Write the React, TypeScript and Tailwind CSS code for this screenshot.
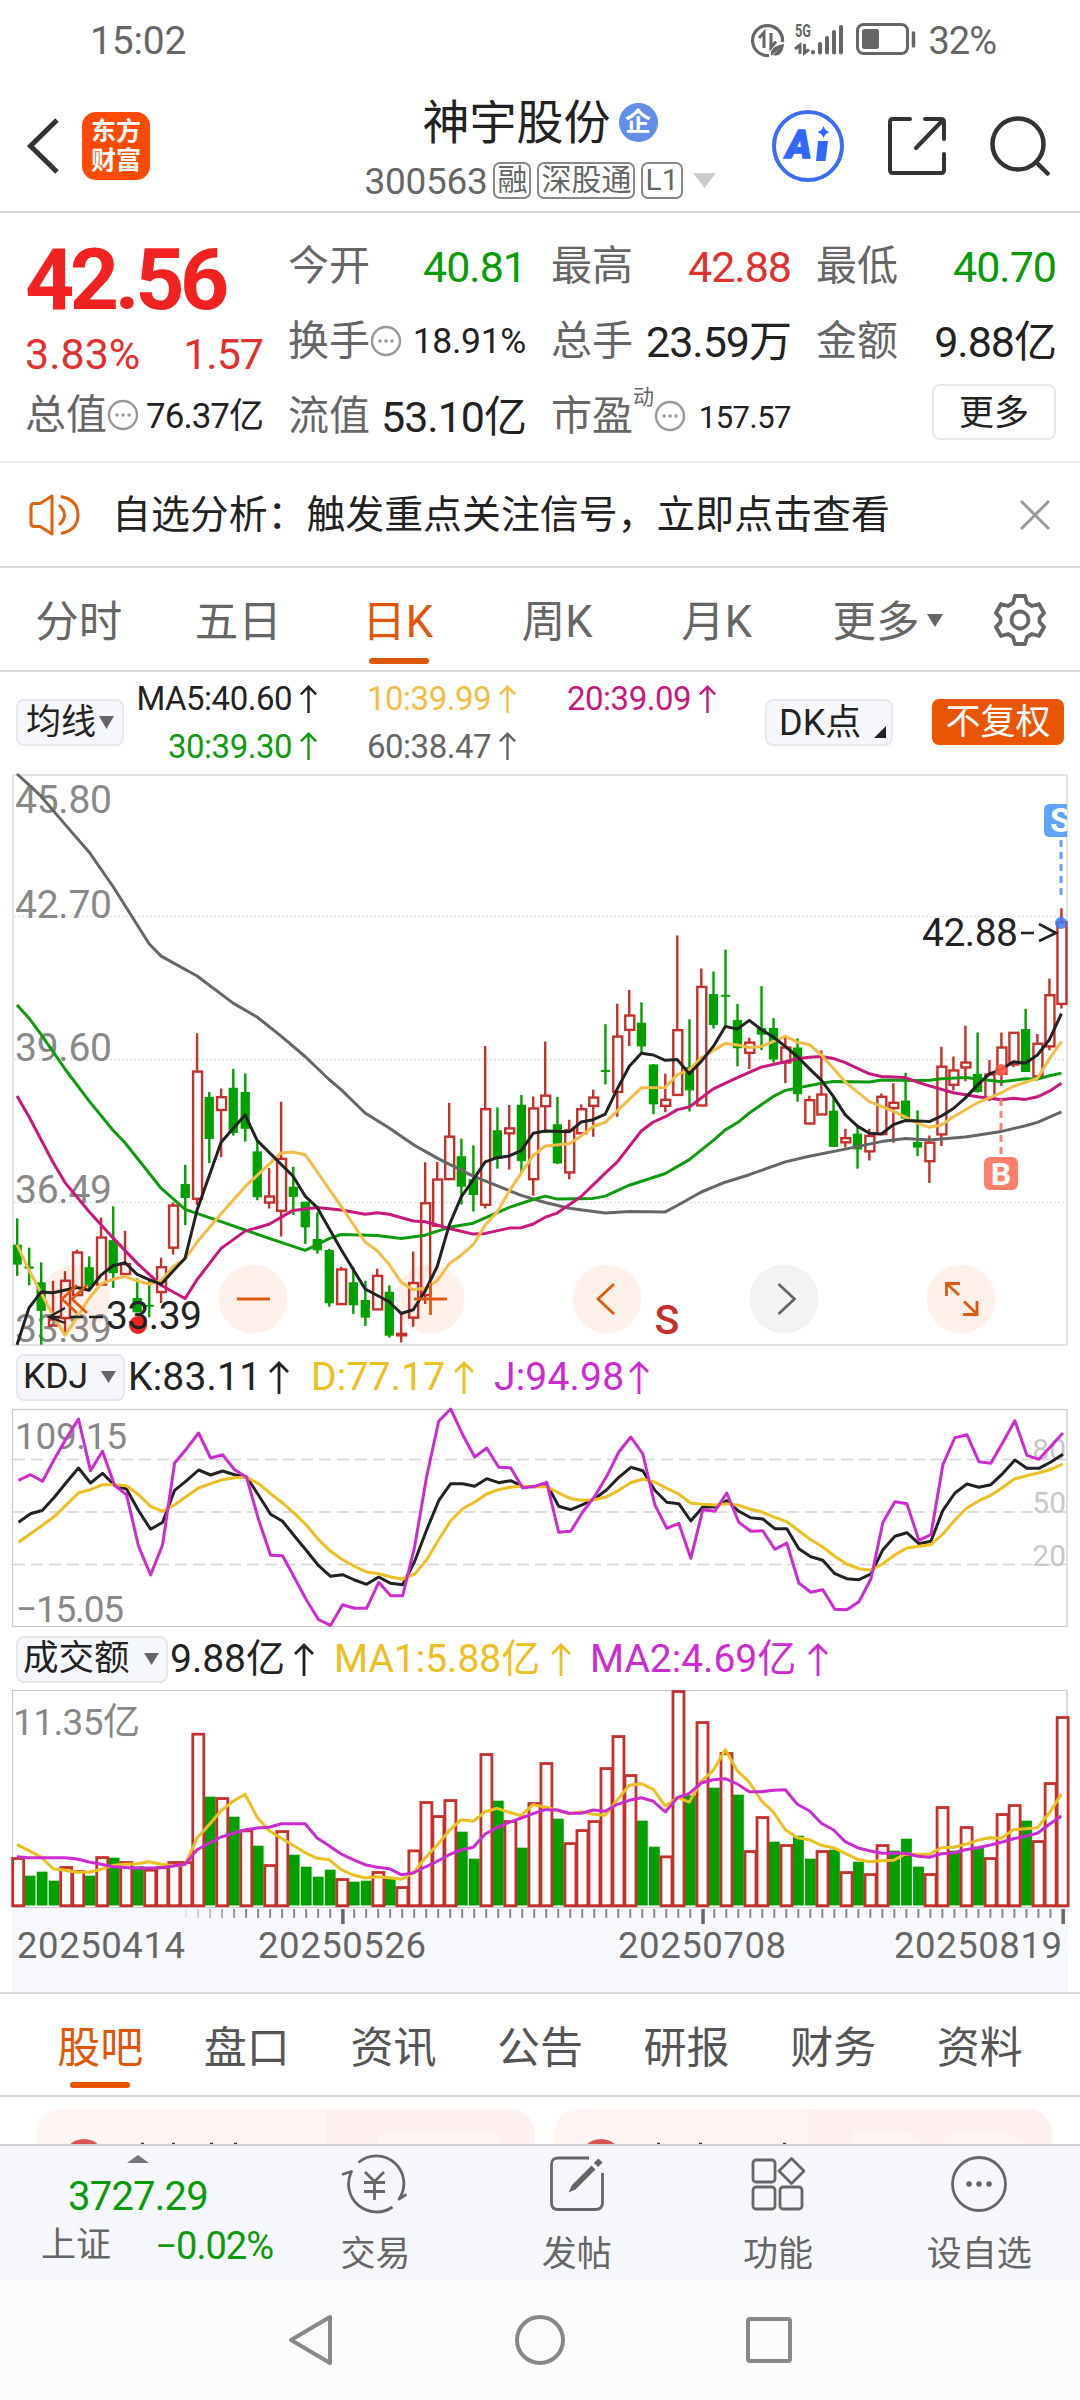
import type { ReactNode } from "react";
import clsx from "clsx";

type Candle = [color: "r" | "g", high: number, top: number, bottom: number, low: number];
type Series = [index: number, value: number][];

// candles, one per trading day, in chart units from the top edge
const CANDLES: Candle[] = [
  ["g", 1192, 1262, 1315, 1345], ["g", 1270, 1320, 1326, 1370], ["g", 1309, 1362, 1438, 1528], ["r", 1358, 1461, 1477, 1477],
  ["r", 1333, 1358, 1457, 1494], ["r", 1275, 1283, 1396, 1396], ["g", 1293, 1322, 1370, 1380], ["r", 1190, 1243, 1368, 1368],
  ["g", 1160, 1250, 1338, 1377], ["r", 1225, 1314, 1340, 1340], ["g", 1352, 1404, 1442, 1442], ["g", 1355, 1422, 1427, 1455],
  ["r", 1297, 1322, 1388, 1417], ["r", 1150, 1158, 1270, 1288], ["g", 1050, 1101, 1138, 1210], ["r", 700, 802, 1140, 1157],
  ["g", 856, 869, 981, 1045], ["r", 847, 870, 904, 1030], ["g", 795, 845, 965, 972], ["g", 807, 856, 954, 988],
  ["g", 985, 1014, 1136, 1144], ["r", 1058, 1134, 1150, 1166], ["r", 882, 1034, 1172, 1240], ["g", 1055, 1108, 1135, 1183],
  ["g", 1148, 1148, 1216, 1260], ["g", 1176, 1247, 1277, 1286], ["g", 1273, 1276, 1418, 1427], ["r", 1321, 1328, 1420, 1420],
  ["g", 1322, 1362, 1423, 1446], ["g", 1358, 1409, 1456, 1478], ["r", 1326, 1345, 1434, 1434], ["g", 1370, 1387, 1504, 1509],
  ["r", 1445, 1499, 1503, 1522], ["r", 1280, 1364, 1456, 1480], ["r", 1043, 1152, 1396, 1420], ["r", 1042, 1089, 1212, 1212],
  ["r", 885, 975, 1088, 1088], ["g", 980, 1027, 1108, 1155], ["g", 998, 1088, 1130, 1174], ["r", 734, 902, 1156, 1166],
  ["g", 897, 958, 1034, 1060], ["r", 891, 953, 966, 1062], ["g", 864, 890, 1040, 1070], ["r", 868, 900, 1088, 1132],
  ["r", 722, 866, 894, 965], ["g", 869, 942, 1046, 1048], ["r", 930, 958, 1070, 1088], ["r", 889, 902, 966, 966],
  ["r", 850, 871, 893, 975], ["g", 676, 798, 803, 836], ["r", 622, 709, 856, 922], ["r", 585, 653, 691, 734],
  ["g", 618, 672, 735, 755], ["g", 782, 783, 889, 915], ["r", 808, 877, 893, 910], ["r", 440, 692, 864, 864],
  ["g", 663, 790, 852, 908], ["r", 528, 577, 892, 892], ["g", 536, 596, 678, 688], ["g", 478, 598, 603, 683],
  ["g", 622, 665, 740, 788], ["r", 712, 725, 752, 795], ["g", 575, 686, 704, 745], ["g", 660, 686, 770, 778],
  ["r", 710, 738, 778, 832], ["g", 714, 738, 862, 882], ["r", 866, 878, 940, 940], ["r", 746, 863, 916, 916],
  ["g", 870, 906, 1002, 1002], ["r", 954, 979, 990, 1004], ["g", 948, 967, 1009, 1060], ["r", 954, 973, 1014, 1038],
  ["r", 860, 869, 968, 968], ["r", 833, 885, 899, 991], ["g", 805, 879, 927, 930], ["g", 905, 989, 1004, 1027],
  ["r", 972, 991, 1040, 1098], ["r", 736, 789, 969, 1000], ["r", 762, 799, 837, 852], ["r", 680, 778, 791, 828],
  ["g", 698, 808, 856, 858], ["r", 771, 810, 874, 880], ["r", 698, 738, 808, 840], ["r", 698, 699, 783, 790],
  ["g", 635, 689, 803, 803], ["r", 702, 728, 815, 820], ["r", 555, 599, 735, 745], ["r", 368, 405, 622, 634],
];

const MA60: Series = [[0, 11], [1, 40], [2, 70], [4, 145], [6, 218], [8, 310], [11, 462], [12, 495], [15, 548], [18, 620], [20, 657], [22, 708], [24, 762], [26, 823], [27, 850], [29, 912], [31, 952], [33, 996], [35, 1032], [38, 1080], [42, 1131], [44, 1150], [46, 1165], [49, 1178], [51, 1174], [54, 1175], [55, 1158], [57, 1122], [59, 1096], [61, 1076], [64, 1042], [66, 1027], [69, 1008], [72, 988], [74, 980], [76, 984], [79, 976], [82, 961], [84, 946], [85, 937], [87, 909]];
const MA30: Series = [[0, 625], [1, 660], [2, 703], [4, 795], [6, 880], [8, 958], [9, 991], [12, 1112], [14, 1168], [17, 1201], [19, 1223], [21, 1245], [24, 1277], [25, 1262], [26, 1246], [27, 1235], [30, 1238], [32, 1246], [34, 1237], [36, 1216], [38, 1205], [41, 1163], [43, 1142], [44, 1133], [45, 1141], [48, 1139], [49, 1133], [51, 1104], [54, 1073], [56, 1036], [58, 985], [59, 957], [60, 938], [61, 912], [63, 868], [64, 852], [67, 833], [68, 828], [71, 830], [72, 824], [75, 826], [76, 825], [77, 821], [79, 818], [82, 829], [84, 821], [85, 822], [86, 813], [87, 806]];
const MA20: Series = [[0, 867], [1, 922], [3, 1043], [4, 1097], [6, 1174], [8, 1244], [10, 1311], [12, 1370], [14, 1405], [15, 1355], [17, 1272], [19, 1226], [21, 1208], [23, 1171], [25, 1163], [27, 1170], [29, 1181], [30, 1177], [31, 1181], [33, 1199], [34, 1201], [36, 1219], [38, 1234], [39, 1232], [41, 1218], [42, 1217], [43, 1207], [44, 1189], [45, 1178], [47, 1134], [49, 1072], [50, 1042], [52, 960], [53, 936], [54, 922], [55, 903], [56, 896], [58, 848], [60, 818], [62, 790], [64, 776], [65, 768], [66, 764], [67, 762], [68, 767], [69, 778], [71, 808], [72, 815], [74, 818], [75, 830], [76, 840], [78, 858], [80, 869], [82, 877], [83, 873], [84, 876], [85, 869], [86, 854], [87, 833]];
const MA10: Series = [[0, 1262], [1, 1330], [2, 1390], [3, 1450], [4, 1503], [5, 1455], [6, 1405], [7, 1366], [8, 1354], [9, 1346], [10, 1358], [11, 1367], [12, 1358], [13, 1320], [14, 1300], [15, 1255], [17, 1180], [19, 1108], [21, 1048], [22, 1018], [23, 1016], [24, 1023], [25, 1068], [27, 1160], [29, 1255], [30, 1278], [31, 1315], [32, 1362], [33, 1382], [34, 1378], [35, 1358], [36, 1313], [37, 1290], [38, 1262], [39, 1210], [40, 1175], [41, 1120], [42, 1072], [43, 1025], [44, 1000], [46, 994], [47, 973], [48, 948], [49, 937], [52, 845], [54, 844], [55, 810], [56, 797], [57, 765], [59, 727], [60, 731], [61, 738], [62, 735], [63, 722], [64, 708], [65, 724], [66, 730], [67, 758], [68, 793], [69, 830], [71, 882], [73, 907], [75, 939], [76, 950], [77, 944], [78, 922], [80, 885], [81, 872], [82, 858], [83, 841], [85, 820], [86, 768], [87, 722]];
const MA5: Series = [[0, 1528], [1, 1430], [2, 1388], [3, 1390], [5, 1376], [6, 1383], [7, 1343], [8, 1318], [9, 1310], [10, 1341], [11, 1355], [12, 1367], [13, 1332], [14, 1298], [15, 1170], [17, 990], [19, 917], [20, 985], [23, 1080], [24, 1133], [25, 1163], [27, 1275], [29, 1380], [31, 1414], [32, 1445], [33, 1435], [34, 1385], [35, 1320], [36, 1210], [37, 1135], [38, 1090], [39, 1042], [40, 1031], [41, 1026], [42, 1012], [43, 966], [44, 960], [46, 962], [47, 936], [48, 930], [49, 915], [50, 848], [51, 788], [52, 753], [53, 758], [54, 772], [55, 770], [56, 808], [57, 775], [58, 735], [59, 682], [60, 689], [61, 666], [62, 690], [63, 710], [64, 735], [65, 762], [66, 794], [67, 825], [68, 868], [69, 917], [70, 947], [71, 966], [72, 968], [73, 943], [74, 932], [76, 935], [77, 920], [78, 900], [79, 872], [80, 838], [81, 808], [82, 796], [83, 776], [84, 780], [85, 758], [86, 717], [87, 648]];

const KDJ_J = [422, 405, 425, 358, 295, 238, 393, 335, 437, 465, 620, 706, 615, 370, 327, 280, 355, 345, 390, 413, 540, 647, 648, 715, 782, 840, 857, 795, 806, 806, 728, 768, 768, 620, 410, 245, 208, 285, 352, 325, 383, 384, 445, 440, 428, 578, 575, 517, 470, 410, 337, 292, 343, 495, 566, 551, 656, 510, 515, 460, 548, 575, 573, 629, 610, 730, 758, 750, 809, 810, 786, 718, 548, 486, 492, 602, 585, 375, 294, 285, 366, 371, 308, 243, 347, 359, 320, 280];
const KDJ_K = [548, 522, 512, 472, 428, 385, 430, 401, 437, 448, 513, 569, 548, 452, 423, 391, 406, 394, 405, 412, 467, 524, 545, 590, 633, 678, 710, 705, 721, 734, 712, 731, 735, 665, 570, 483, 432, 432, 440, 417, 429, 423, 440, 441, 433, 500, 510, 495, 477, 450, 413, 383, 393, 452, 488, 492, 544, 502, 502, 483, 515, 534, 538, 567, 567, 627, 651, 662, 702, 717, 720, 703, 630, 590, 579, 612, 605, 512, 460, 433, 443, 435, 401, 361, 386, 386, 367, 344];
const KDJ_D = [608, 582, 557, 530, 495, 459, 450, 435, 435, 438, 465, 500, 515, 495, 470, 445, 432, 420, 414, 413, 432, 462, 490, 522, 557, 600, 635, 660, 680, 697, 702, 712, 718, 703, 660, 600, 543, 507, 487, 463, 450, 442, 440, 441, 441, 460, 477, 482, 480, 471, 452, 429, 418, 427, 446, 463, 491, 494, 496, 492, 497, 509, 518, 533, 546, 573, 600, 622, 650, 673, 687, 692, 672, 645, 625, 620, 615, 583, 541, 505, 483, 467, 443, 417, 408, 399, 389, 373];

const VOLUMES = [563, 618, 606, 633, 590, 602, 618, 560, 564, 575, 590, 598, 590, 575, 575, 190, 381, 383, 441, 480, 528, 584, 482, 555, 591, 621, 600, 626, 636, 633, 605, 624, 650, 540, 395, 437, 389, 486, 567, 251, 393, 452, 534, 398, 278, 447, 518, 479, 452, 293, 197, 314, 453, 531, 558, 62, 377, 155, 354, 248, 375, 542, 440, 516, 524, 498, 567, 542, 540, 605, 576, 611, 524, 543, 507, 591, 611, 410, 543, 470, 531, 563, 431, 404, 453, 512, 338, 140];
// days whose turnover bar is drawn as a solid green (falling) bar
const GREEN_VOLUMES = new Set([1, 2, 3, 6, 8, 10, 16, 18, 20, 23, 24, 25, 26, 28, 29, 31, 37, 38, 40, 42, 45, 52, 53, 56, 58, 60, 63, 65, 66, 68, 70, 73, 74, 75, 78, 80, 84]);
const VOL_MA1: Series = [[0, 525], [1, 543], [2, 562], [3, 597], [4, 602], [5, 608], [6, 608], [7, 599], [8, 587], [9, 584], [10, 582], [11, 576], [12, 584], [13, 588], [14, 585], [15, 505], [16, 465], [17, 423], [18, 395], [19, 374], [20, 443], [21, 483], [22, 505], [23, 527], [24, 549], [25, 566], [26, 570], [27, 600], [28, 616], [29, 625], [30, 621], [31, 624], [32, 629], [33, 610], [34, 565], [35, 526], [36, 483], [37, 450], [38, 455], [39, 426], [40, 416], [41, 428], [42, 438], [43, 405], [44, 412], [45, 422], [46, 432], [47, 426], [48, 434], [49, 437], [50, 390], [51, 347], [52, 342], [53, 359], [54, 409], [55, 384], [56, 397], [57, 335], [58, 302], [59, 240], [60, 303], [61, 338], [62, 393], [63, 427], [64, 480], [65, 504], [66, 510], [67, 527], [68, 534], [69, 551], [70, 569], [71, 576], [72, 573], [73, 572], [74, 553], [75, 554], [76, 554], [77, 534], [78, 533], [79, 524], [80, 512], [81, 504], [82, 506], [83, 480], [84, 477], [85, 474], [86, 430], [87, 373]];
const VOL_MA2: Series = [[0, 561], [1, 564], [4, 564], [5, 568], [6, 577], [7, 584], [8, 591], [10, 596], [12, 594], [14, 584], [15, 540], [16, 521], [17, 502], [19, 480], [20, 475], [21, 473], [22, 462], [24, 462], [25, 505], [26, 528], [27, 553], [28, 570], [29, 585], [30, 593], [31, 597], [32, 615], [33, 610], [34, 592], [35, 575], [36, 555], [37, 541], [38, 533], [39, 493], [40, 474], [41, 458], [42, 445], [43, 432], [44, 420], [45, 421], [46, 431], [47, 431], [48, 421], [49, 425], [50, 404], [51, 392], [52, 384], [53, 395], [54, 427], [55, 384], [56, 371], [57, 340], [58, 330], [59, 327], [60, 343], [61, 366], [62, 366], [63, 362], [64, 360], [65, 404], [66, 423], [67, 461], [68, 480], [69, 516], [70, 534], [71, 543], [72, 551], [74, 551], [75, 560], [76, 563], [77, 552], [78, 550], [79, 540], [80, 534], [81, 527], [82, 518], [83, 507], [84, 500], [85, 491], [86, 464], [87, 439]];

const STEP = 12.005;
const RED = "#c5302d";
const GREEN = "#00a000";

const kx = (i: number) => 17 + i * STEP;
const ky = (v: number) => (v - 11) / 2.658;
const jx = (i: number) => 18.5 + i * STEP;
const jy = (v: number) => (v - 208) / 3;
const vy = (v: number) => (v - 61) / 3;

const toPoints = (s: Series, x: (i: number) => number, y: (v: number) => number) =>
  s.map(([i, v]) => `${x(i).toFixed(1)},${y(v).toFixed(1)}`).join(" ");

const indexed = (values: number[]): Series => values.map((v, i) => [i, v]);

function Line({ points, color, width = 3 }: { points: string; color: string; width?: number }) {
  return <polyline points={points} fill="none" stroke={color} strokeWidth={width} strokeLinejoin="round" />;
}

function Up({ className = "h-[33px] w-[20px]" }: { className?: string }) {
  return (
    <svg viewBox="0 0 20 33" className={className} fill="none" stroke="currentColor" strokeWidth="2.800">
      <path d="M10 33V1.500M1 11L10 2L19 11" />
    </svg>
  );
}

function Caret({ className }: { className?: string }) {
  return (
    <svg viewBox="0 0 14 12" preserveAspectRatio="none" className={className} fill="currentColor">
      <path d="M0 0h14L7 12z" />
    </svg>
  );
}

function StatusBar() {
  return (
    <div className="flex h-[80px] items-center pl-[90px] pr-[84px] text-[#666]">
      <span className="pt-[2px] text-[39px] tracking-[-0.200px]">15:02</span>
      <svg viewBox="0 0 168 36" className="ml-auto mr-[10px] h-[36px] w-[168px]">
        <g fill="none" stroke="#666" strokeWidth="3.200">
          <path d="M19 33.500A15 15 0 1 1 32.500 20" />
          <path d="M9 16l5-5.500V26M21 11v14.500l5-6" strokeWidth="3" />
        </g>
        <path d="M21 34c-1-7 3-10 13-12-1 9-5 13-11 11l7-7z" fill="#666" />
        <text x="45" y="14.500" fontSize="18" fontWeight="700" fill="#666" textLength="16" lengthAdjust="spacingAndGlyphs">5G</text>
        <path d="M45 27l5-4V32M54.500 22v9l4.500-3.500" fill="none" stroke="#666" strokeWidth="3" />
        <g stroke="#666" strokeWidth="4" strokeLinecap="round">
          <path d="M63 30v.5M70 22v8.500M77 16v14.500M84 10v20.500M91 5v25.500" />
        </g>
        <rect x="107.500" y="2.500" width="50" height="29" rx="6" fill="none" stroke="#666" strokeWidth="3" />
        <rect x="112" y="7" width="17" height="20" rx="2.500" fill="#666" />
        <path d="M163.500 11v13" stroke="#666" strokeWidth="3.500" strokeLinecap="round" />
      </svg>
      <span className="pt-[2px] text-[38px] tracking-[-1px]">32%</span>
    </div>
  );
}

function Tag({ children }: { children: ReactNode }) {
  return (
    <span className="flex h-[37px] items-center justify-center rounded-[7px] border-2 border-[#888] px-[2px] text-[30px] leading-none">
      {children}
    </span>
  );
}

function Header() {
  return (
    <header className="grid h-[133px] grid-cols-[1fr_auto_1fr] border-b-2 border-[#d8d8d8]">
      <div className="flex items-center gap-[22px] pl-[26px]">
        <svg viewBox="0 0 34 58" className="h-[58px] w-[34px]" fill="none" stroke="#333" strokeWidth="5">
          <path d="M31 3L4.500 29L31 55" />
        </svg>
        <div className="flex h-[68px] w-[68px] flex-col items-center justify-center rounded-[14px] bg-[#ff4a05] text-[25px] font-bold leading-[29px] text-white">
          <span>东方</span>
          <span>财富</span>
        </div>
      </div>
      <div className="flex flex-col items-center pt-[15px]">
        <div className="flex h-[54px] items-center gap-[8px]">
          <h1 className="text-[47px] leading-none text-[#222]">神宇股份</h1>
          <span className="flex h-[39px] w-[39px] items-center justify-center rounded-full bg-[#628eea] text-[26px] font-bold leading-none text-white">
            企
          </span>
        </div>
        <div className="mt-[12px] flex h-[38px] items-center gap-[6px] text-[#666]">
          <span className="pt-[2px] text-[37px] leading-none tracking-[-0.300px]">300563</span>
          <Tag>融</Tag>
          <Tag>深股通</Tag>
          <Tag>L1</Tag>
          <Caret className="ml-[4px] h-[15px] w-[23px] text-[#ccc]" />
        </div>
      </div>
      <div className="flex items-center justify-end gap-[44px] pr-[30px]">
        <svg viewBox="0 0 72 72" className="h-[72px] w-[72px]">
          <circle cx="36" cy="36" r="34" fill="none" stroke="#3d6cf0" strokeWidth="4" />
          <text x="14" y="48" fontSize="39" fontWeight="900" fill="#3366ff" fontStyle="italic" stroke="#3366ff" strokeWidth="1.500">A</text>
          <path d="M46 31h10l-2.500 20h-9.500z" fill="#3366ff" />
          <path d="M51.500 16q1.500 5 6 6q-4.500 1.500-6 6q-1.500-4.500-6-6q4.500-1 6-6z" fill="#3366ff" />
        </svg>
        <svg viewBox="0 0 58 58" className="h-[58px] w-[58px]" fill="none" stroke="#333" strokeWidth="4" strokeLinecap="round" strokeLinejoin="round">
          <path d="M22 2H5q-3 0-3 3v48q0 3 3 3h48q3 0 3-3V37" />
          <path d="M37 2h16q3 0 3 3v17M55 3L28 31" />
        </svg>
        <svg viewBox="0 0 60 60" className="h-[60px] w-[60px]" fill="none" stroke="#333" strokeWidth="4.500" strokeLinecap="round">
          <circle cx="28" cy="28" r="25.500" />
          <path d="M46 46L57.500 57.500" />
        </svg>
      </div>
    </header>
  );
}

function Dots() {
  return (
    <svg viewBox="0 0 32 32" className="h-[32px] w-[32px] text-[#999]">
      <circle cx="16" cy="16" r="14" fill="none" stroke="currentColor" strokeWidth="2.400" />
      <path d="M10 16h.1M16 16h.1M22 16h.1" stroke="currentColor" strokeWidth="3.500" strokeLinecap="round" />
    </svg>
  );
}

function Stat({ label, value, dots, sup, color = "text-[#222]", size = "text-[43px] tracking-[-1px]" }: {
  label: string;
  value: string;
  dots?: boolean;
  sup?: string;
  color?: string;
  size?: string;
}) {
  return (
    <div className="flex h-[56px] items-center whitespace-nowrap leading-none">
      <span className="text-[41px] text-[#666]">{label}</span>
      {sup && <span className="mb-[38px] text-[21px] text-[#666]">{sup}</span>}
      {dots && <Dots />}
      <span className={clsx("-mr-[2px] ml-auto pt-[2px]", size, color)}>{value}</span>
    </div>
  );
}

function Quote() {
  return (
    <section className="grid h-[250px] grid-cols-[236px_236px_238px_238px] gap-x-[27px] border-b-2 border-[#eee] pl-[25px]">
      <div className="flex flex-col pt-[25px]">
        <div className="h-[83px] text-[86px] font-bold leading-[83px] tracking-[-4.500px] text-[#f22222]">42.56</div>
        <div className="mt-[3px] flex h-[60px] items-center justify-between text-[43px] text-[#e03030]">
          <span>3.83%</span>
          <span className="-mr-[2px] tracking-[-1px]">1.57</span>
        </div>
        <div className="mt-[3px]">
          <Stat label="总值" value="76.37亿" dots size="text-[35px] tracking-[-1px]" />
        </div>
      </div>
      <div className="flex flex-col gap-[19px] pt-[25px]">
        <Stat label="今开" value="40.81" color="text-[#0a9a0a]" />
        <Stat label="换手" value="18.91%" dots size="text-[35.500px] tracking-[-0.300px]" />
        <Stat label="流值" value="53.10亿" />
      </div>
      <div className="flex flex-col gap-[19px] pt-[25px]">
        <Stat label="最高" value="42.88" color="text-[#e03030]" />
        <Stat label="总手" value="23.59万" />
        <Stat label="市盈" value="157.57" sup="动" dots size="text-[31px] tracking-[-0.500px]" />
      </div>
      <div className="flex flex-col gap-[19px] pt-[25px]">
        <Stat label="最低" value="40.70" color="text-[#0a9a0a]" />
        <Stat label="金额" value="9.88亿" />
        <button className="-mr-[2px] -mt-[4px] ml-auto flex h-[56px] w-[124px] items-center justify-center rounded-[8px] border-2 border-[#e6e6e6] pt-[2px] text-[35px] leading-none text-[#222]">
          更多
        </button>
      </div>
    </section>
  );
}

function Notice() {
  return (
    <div className="flex h-[105px] items-center border-b-2 border-[#d8d8d8] pl-[28px] pr-[30px]">
      <svg viewBox="0 0 54 44" className="h-[44px] w-[54px]" fill="none" stroke="#e0600f" strokeWidth="3" strokeLinejoin="round">
        <path d="M24 3L12 10.500H6Q3 10.500 3 14V30Q3 33.500 6 33.500H12L24 41z" />
        <path d="M31 12Q42 22 31 32M33 3.500Q50 7 50 22T33 40.500" />
      </svg>
      <p className="ml-[30px] whitespace-nowrap pt-[1px] text-[38.900px] text-[#222]">自选分析：触发重点关注信号，立即点击查看</p>
      <svg viewBox="0 0 30 30" className="ml-auto h-[30px] w-[30px]" stroke="#999" strokeWidth="3">
        <path d="M1 1L29 29M29 1L1 29" />
      </svg>
    </div>
  );
}

const PERIODS = ["分时", "五日", "日K", "周K", "月K"];

function PeriodTabs() {
  return (
    <nav className="flex h-[104px] border-b-2 border-[#d8d8d8] pr-[34px] text-[43.500px] leading-none text-[#666]">
      {PERIODS.map((p) => (
        <div key={p} className={clsx("flex w-[159.500px] flex-col items-center pt-[33px]", p === "日K" && "text-[#e0560a]")}>
          <span className="-ml-[2px]">{p}</span>
          {p === "日K" && <i className="mt-[13px] h-[6px] w-[60px] rounded-full bg-[#e0560a]" />}
        </div>
      ))}
      <div className="flex items-start gap-[7px] pl-[35px] pt-[33px]">
        <span>更多</span>
        <Caret className="mt-[13px] h-[13px] w-[16px]" />
      </div>
      <svg viewBox="0 0 52 52" className="ml-auto mt-[26px] h-[52px] w-[52px]" fill="none" stroke="#666" strokeWidth="3.800" strokeLinejoin="round">
        <path d="M21 2H31L33 9L38 12L45 10L50 19L45.500 24V28L50 33L45 42L38 40L33 43L31 50H21L19 43L14 40L7 42L2 33L6.500 28V24L2 19L7 10L14 12L19 9Z" />
        <circle cx="26" cy="26" r="8.500" />
      </svg>
    </nav>
  );
}

function MaItem({ children, className }: { children: ReactNode; className: string }) {
  return (
    <span className={clsx("flex items-center gap-[8px]", className)}>
      {children}
      <Up className="h-[28px] w-[17px]" />
    </span>
  );
}

function MaRow() {
  return (
    <div className="flex h-[102px] pl-[16px] pr-[16px] text-[#222]">
      <button className="mt-[27px] flex h-[47px] w-[108px] items-center justify-center gap-[3px] rounded-[8px] border-2 border-[#e6e8ee] bg-[#f6f7fa] text-[35px] leading-none">
        均线
        <Caret className="h-[13px] w-[15px] text-[#666]" />
      </button>
      <div className="ml-[12px] grid h-[98px] grid-cols-[181px_199px_200px] grid-rows-2 justify-items-end whitespace-nowrap pt-[3px] text-[33px] leading-none tracking-[-0.500px]">
        <MaItem className="text-[#222]">MA5:40.60</MaItem>
        <MaItem className="text-[#f3bd48]">10:39.99</MaItem>
        <MaItem className="text-[#c8187c]">20:39.09</MaItem>
        <MaItem className="text-[#109a10]">30:39.30</MaItem>
        <MaItem className="text-[#666]">60:38.47</MaItem>
      </div>
      <button className="ml-auto mt-[27px] flex h-[47px] w-[128px] items-center rounded-[8px] border-2 border-[#e6e8ee] bg-[#f6f7fa] pl-[12px] text-[36px] leading-none">
        DK点
        <svg viewBox="0 0 12 12" className="ml-auto mr-[5px] mt-[18px] h-[12px] w-[12px]">
          <path d="M12 0V12H0z" fill="#222" />
        </svg>
      </button>
      <button className="ml-[39px] mt-[27px] flex h-[46px] w-[132px] items-center justify-center rounded-[7px] bg-[#ea5504] pt-[1px] text-[35px] leading-none text-white">
        不复权
      </button>
    </div>
  );
}

const BUTTON_XS = [76, 253, 430, 607, 784, 961];

function KChart() {
  return (
    <svg viewBox="0 0 1080 571" className="h-[571px] w-[1080px] overflow-visible">
      <rect x="13" y="1" width="1054" height="570" fill="none" stroke="#e2e2e2" strokeWidth="2" />
      {[390, 770, 1150].map((v) => (
        <path key={v} d={`M14 ${ky(v)}H1066`} stroke="#e0e0e0" strokeWidth="1.500" strokeDasharray="2 2" />
      ))}
      {BUTTON_XS.map((x) => (
        <circle key={x} cx={x} cy="525" r="34.500" fill={x === 784 ? "#f3f3f3" : "#fff1e9"} />
      ))}
      <g fontSize="39" fill="#888">
        {[["45.80", 115], ["42.70", 393], ["39.60", 773], ["36.49", 1152], ["33.39", 1522]].map(([t, v]) => (
          <text key={t} x="15" y={ky(v as number)} textLength="97">{t}</text>
        ))}
      </g>
      {CANDLES.map(([c, high, top, bottom, low], i) => {
        const x = kx(i);
        const left = Math.max(x - 4.5, 13);
        return c === "g" ? (
          <g key={i} fill={GREEN}>
            <rect x={x - 1} y={ky(high)} width="2.400" height={ky(low) - ky(high)} />
            <rect x={left} y={ky(top)} width={x + 4.8 - left} height={ky(bottom) - ky(top)} />
          </g>
        ) : (
          <g key={i} stroke={RED} strokeWidth="2.400" fill="none">
            <path d={`M${x} ${ky(high)}V${ky(top)}M${x} ${ky(bottom)}V${ky(low)}`} />
            <rect x={x - 4} y={ky(top)} width="9" height={ky(bottom) - ky(top)} />
          </g>
        );
      })}
      <Line points={toPoints(MA60, kx, ky)} color="#666" />
      <Line points={toPoints(MA30, kx, ky)} color="#109a10" />
      <Line points={toPoints(MA20, kx, ky)} color="#c8187c" />
      <Line points={toPoints(MA10, kx, ky)} color="#f3bd48" />
      <Line points={toPoints(MA5, kx, ky)} color="#222" />

      {/* low and high price markers */}
      <circle cx="138" cy="551" r="9" fill="#f22222" />
      <path d="M65 534L49 543L65 549M49 543H60M70 543H83M89 543H103" fill="none" stroke="#222" strokeWidth="2.400" />
      <text x="106" y={ky(1486)} fontSize="39" fill="#222" textLength="96">33.39</text>
      <text x="922" y={ky(467)} fontSize="39" fill="#222" textLength="96">42.88</text>
      <path d="M1021 159H1034M1039 150L1056 159L1039 167" fill="none" stroke="#222" strokeWidth="2.600" />

      {/* buy / sell signals */}
      <path d="M1061 66V123" stroke="#62a3fa" strokeWidth="3" strokeDasharray="7 5" />
      <circle cx="1061" cy="149" r="6" fill="#3c7df0" fillOpacity="0.850" />
      <path d="M1067 30H1050Q1044 30 1044 36V57Q1044 63 1050 63H1067Z" fill="#62a3fa" />
      <svg x="1044" y="30" width="23" height="34">
        <text x="6" y="28" fontSize="34" fontWeight="700" fill="#fff">S</text>
      </svg>
      <path d="M1001 325V381" stroke="#fa8472" strokeWidth="3" strokeDasharray="7 5" />
      <circle cx="1001" cy="296" r="6" fill="#fa5a46" fillOpacity="0.900" />
      <rect x="984" y="383" width="34" height="33" rx="6" fill="#fd7f6c" />
      <text x="1001" y="411" fontSize="32" fontWeight="700" fill="#fff" textAnchor="middle">B</text>
      <text x="667" y={ky(1500)} fontSize="41" fontWeight="500" fill={RED} textAnchor="middle">S</text>

      {/* chart controls */}
      <g fill="none" stroke="#dd5a12" strokeWidth="2.800">
        <path d="M77 511L62 525L77 539M87 511L72 525L87 539" />
        <path d="M237 525H270" />
        <path d="M414 525H447M430.500 509V541" />
        <path d="M614 510L598 525L614 540" />
        <path d="M778.500 510L794.500 525L778.500 540" stroke="#666" />
        <path d="M960 509.500H946.500V522M946.500 509.500L959 521M964 527.500L977 540M977 527V540.500H963" />
      </g>
    </svg>
  );
}

function KdjChart() {
  return (
    <svg viewBox="0 0 1080 219" className="h-[219px] w-[1080px] overflow-visible">
      <rect x="12.500" y="0.500" width="1054.500" height="217" fill="none" stroke="#c8c8c8" strokeWidth="1.200" />
      {[50.5, 103, 155.5].map((y) => (
        <path key={y} d={`M13 ${y}H1066`} stroke="#d4d4d4" strokeWidth="1.300" strokeDasharray="12 6" />
      ))}
      <g fontSize="37" fill="#888">
        <text x="15" y="40" textLength="112">109.15</text>
        <text x="16" y="213" textLength="108">−15.05</text>
      </g>
      <g fontSize="30" fill="#c8c8c8" textAnchor="end">
        <text x="1066" y="51">80</text>
        <text x="1066" y="104">50</text>
        <text x="1066" y="157">20</text>
      </g>
      <Line points={toPoints(indexed(KDJ_K), jx, jy)} color="#222" />
      <Line points={toPoints(indexed(KDJ_D), jx, jy)} color="#ecc020" />
      <Line points={toPoints(indexed(KDJ_J), jx, jy)} color="#cc2ccf" />
    </svg>
  );
}

function VolumeChart() {
  const bars = VOLUMES.map((v, i) => ({ x: 18 + i * STEP, y: vy(v), green: GREEN_VOLUMES.has(i) }));
  return (
    <svg viewBox="0 0 1080 219" className="h-[219px] w-[1080px]">
      <rect x="12.500" y="0.500" width="1054.500" height="217" fill="none" stroke="#c8c8c8" strokeWidth="1.200" />
      <text x="13" y="45" fontSize="37" fill="#888" textLength="127">11.35亿</text>
      {bars.filter((b) => b.green).map((b) => (
        <rect key={b.x} x={b.x - 5.3} y={b.y} width="10.800" height={215.5 - b.y} fill={GREEN} />
      ))}
      {bars.filter((b) => !b.green).map((b) => (
        <rect key={b.x} x={b.x - 5.3} y={b.y + 1.2} width="11" height={214.5 - b.y} fill="#fff" stroke={RED} strokeWidth="2.800" />
      ))}
      <Line points={toPoints(VOL_MA1, kx, vy)} color="#ecc020" />
      <Line points={toPoints(VOL_MA2, kx, vy)} color="#cc2ccf" />
    </svg>
  );
}

function DateAxis() {
  const ticks = Array.from({ length: 74 }, (_, n) => n + 14);
  return (
    <svg viewBox="0 0 1080 83" className="h-[83px] w-[1080px]">
      <rect x="12" y="0" width="1056" height="83" fill="#f7f8fb" />
      {ticks.map((i) => {
        const major = i === 27 || i === 57 || i === 87;
        return (
          <rect
            key={i}
            x={17 + i * STEP}
            y="0"
            width={major ? 3.5 : 2}
            height={major ? 15 : 9}
            fill={major ? "#666" : "#888"}
            opacity={Math.min(1, (i - 13) * 0.17)}
          />
        );
      })}
      <g fontSize="36.500" fill="#666">
        <text x="17" y="49" textLength="168">20250414</text>
        <text x="258" y="49" textLength="168">20250526</text>
        <text x="618" y="49" textLength="168">20250708</text>
        <text x="894" y="49" textLength="168">20250819</text>
      </g>
    </svg>
  );
}

function IndicatorButton({ children, className }: { children: ReactNode; className: string }) {
  return (
    <button className={clsx("flex h-[47px] items-center justify-between rounded-[8px] border-2 border-[#e6e8ee] bg-[#f6f7fa] pl-[5px] pr-[7px] text-[35.500px] leading-none tracking-normal text-[#222]", className)}>
      {children}
      <Caret className="h-[12px] w-[15px] text-[#666]" />
    </button>
  );
}

const SECTIONS = ["股吧", "盘口", "资讯", "公告", "研报", "财务", "资料"];

function SectionTabs() {
  return (
    <nav className="flex h-[105px] border-y-2 border-[#d8d8d8] px-[27px] text-[43px] leading-none text-[#555]">
      {SECTIONS.map((s, i) => (
        <div key={s} className={clsx("flex flex-1 flex-col items-center pt-[33px]", i === 0 && "text-[#e0560a]")}>
          <span>{s}</span>
          {i === 0 && <i className="mt-[12px] h-[6px] w-[60px] rounded-full bg-[#ea5504]" />}
        </div>
      ))}
    </nav>
  );
}

function Cards() {
  return (
    <div className="flex h-[47px] gap-[18px] overflow-hidden px-[36px] pt-[12px]">
      {[[105, 136, 174, 198], [104, 146, 230]].map((marks, n) => (
        <div key={n} className="h-[120px] w-[499px] shrink-0 overflow-hidden rounded-[26px] bg-[#fff6f4]">
          <svg viewBox="0 0 499 120" className="h-[120px] w-[499px]">
            <path d={n ? "M256 0H499V120H256z" : "M290 0H499V120H290z"} fill="#fdf0ee" />
            {n === 0 ? <path d="M342 24H464V50H342z" fill="#fff5f3" /> : <path d="M300 40V22H350L380 40L400 24Q450 12 480 40z" fill="#fff5f3" />}
            <circle cx="48" cy="51" r="21" fill="#d9534f" />
            {marks.map((x) => (
              <path key={x} d={`M${x} 34.500h3`} stroke="#333" strokeWidth="1.500" />
            ))}
          </svg>
        </div>
      ))}
    </div>
  );
}

const ACTIONS: { label: string; icon: ReactNode }[] = [
  {
    label: "交易",
    icon: (
      <svg viewBox="0 0 66 60" className="mr-[4px] h-[60px] w-[66px]" fill="none" stroke="#666" strokeWidth="2.800">
        <path d="M17.500 8.500A27.500 27.500 0 0 1 58 45L65.500 40.500M51.500 53A28 28 0 0 1 10.500 17.500L1 20.500" strokeLinejoin="round" />
        <path d="M24 18L33.500 27.500L43 18M23 28.500H44M23 37.500H44M33.500 27.500V46" />
      </svg>
    ),
  },
  {
    label: "发帖",
    icon: (
      <svg viewBox="0 0 56 58" className="h-[58px] w-[56px]" fill="none" stroke="#666" strokeWidth="2.800">
        <path d="M40 3H9Q2.500 3 2.500 9.500V48Q2.500 54.500 9 54.500H46Q53.500 54.500 53.500 48V18" />
        <path d="M19.500 37.500L23 30L42.500 10.500L46.500 14.500L26.500 34.500Z" fill="#666" stroke="none" />
        <path d="M47 10L51.500 5.500" strokeWidth="6" strokeLinecap="butt" />
      </svg>
    ),
  },
  {
    label: "功能",
    icon: (
      <svg viewBox="0 0 54 56" className="h-[56px] w-[54px]" fill="none" stroke="#666" strokeWidth="2.800" strokeLinejoin="round">
        <rect x="2" y="4" width="22" height="22" rx="3" />
        <rect x="2" y="31" width="22" height="22" rx="3" />
        <rect x="29" y="31" width="22" height="22" rx="3" />
        <path d="M40.500 2.500L53 15L40.500 27.500L28 15Z" />
      </svg>
    ),
  },
  {
    label: "设自选",
    icon: (
      <svg viewBox="0 0 58 58" className="h-[58px] w-[58px]" fill="none" stroke="#666">
        <circle cx="29" cy="29" r="26.500" strokeWidth="2.800" />
        <path d="M19 29h.1M29 29h.1M39 29h.1" strokeWidth="5.500" strokeLinecap="round" />
      </svg>
    ),
  },
];

function BottomBar() {
  return (
    <div className="flex h-[136px] border-t-2 border-[#d0d0d4] bg-[#f6f7fa] text-[#666]">
      <div className="flex w-[275px] flex-col pl-[41px] pt-[9px]">
        <div className="flex w-[194px] flex-col items-center">
          <svg viewBox="0 0 22 8" className="h-[8px] w-[22px]">
            <path d="M0 8L11 0L22 8z" fill="#777" />
          </svg>
          <span className="mt-[14px] text-[40px] leading-[40px] tracking-[-0.800px] text-[#0a9a0a]">3727.29</span>
        </div>
        <div className="mt-[10px] flex w-[232px] items-center justify-between text-[35px] leading-[38px]">
          <span>上证</span>
          <span className="text-[38px] tracking-[-1px] text-[#0a9a0a]">−0.02%</span>
        </div>
      </div>
      {ACTIONS.map((a) => (
        <div key={a.label} className="flex w-[201.250px] flex-col items-center pt-[8px]">
          <div className="flex h-[60px] items-center">{a.icon}</div>
          <span className="mt-[22px] text-[35px] leading-[38px]">{a.label}</span>
        </div>
      ))}
    </div>
  );
}

function SystemNav() {
  return (
    <div className="flex h-[120px] items-center justify-center gap-[180px] bg-[#fcfcfc]">
      <svg viewBox="0 0 46 52" className="h-[52px] w-[46px]" fill="none" stroke="#888" strokeWidth="4" strokeLinejoin="round">
        <path d="M42 3V49L3 26Z" />
      </svg>
      <svg viewBox="0 0 52 52" className="h-[52px] w-[52px]" fill="none" stroke="#888" strokeWidth="4">
        <circle cx="26" cy="26" r="23" />
      </svg>
      <svg viewBox="0 0 46 46" className="h-[46px] w-[46px]" fill="none" stroke="#888" strokeWidth="4">
        <rect x="2" y="2" width="42" height="42" rx="2" />
      </svg>
    </div>
  );
}

export default function App() {
  return (
    <div className="flex h-[2400px] w-[1080px] flex-col overflow-hidden bg-white font-[Roboto,'Noto_Sans_CJK_SC',sans-serif]">
      <StatusBar />
      <Header />
      <Quote />
      <Notice />
      <PeriodTabs />
      <MaRow />
      <KChart />
      <div className="flex h-[64px] items-center whitespace-nowrap pl-[16px] text-[39px] leading-none tracking-[0.200px]">
        <IndicatorButton className="w-[109px]">KDJ</IndicatorButton>
        <span className="ml-[3px] w-[141px] text-[#222]">K:83.11</span>
        <Up className="h-[33px] w-[20px] text-[#222]" />
        <span className="ml-[22px] w-[143px] text-[#ecc020]">D:77.17</span>
        <Up className="h-[33px] w-[20px] text-[#ecc020]" />
        <span className="ml-[20px] w-[135px] text-[#cc2ccf]">J:94.98</span>
        <Up className="h-[33px] w-[20px] text-[#cc2ccf]" />
      </div>
      <KdjChart />
      <div className="flex h-[62px] items-center whitespace-nowrap pl-[16px] text-[39px] leading-none">
        <IndicatorButton className="w-[152px]">成交额</IndicatorButton>
        <span className="ml-[2px] w-[124px] text-[#222]">9.88亿</span>
        <Up className="h-[33px] w-[20px] text-[#222]" />
        <span className="ml-[20px] w-[217px] text-[#ecc020]">MA1:5.88亿</span>
        <Up className="h-[33px] w-[20px] text-[#ecc020]" />
        <span className="ml-[19px] w-[218px] text-[#cc2ccf]">MA2:4.69亿</span>
        <Up className="h-[33px] w-[20px] text-[#cc2ccf]" />
      </div>
      <VolumeChart />
      <DateAxis />
      <SectionTabs />
      <Cards />
      <BottomBar />
      <SystemNav />
    </div>
  );
}
